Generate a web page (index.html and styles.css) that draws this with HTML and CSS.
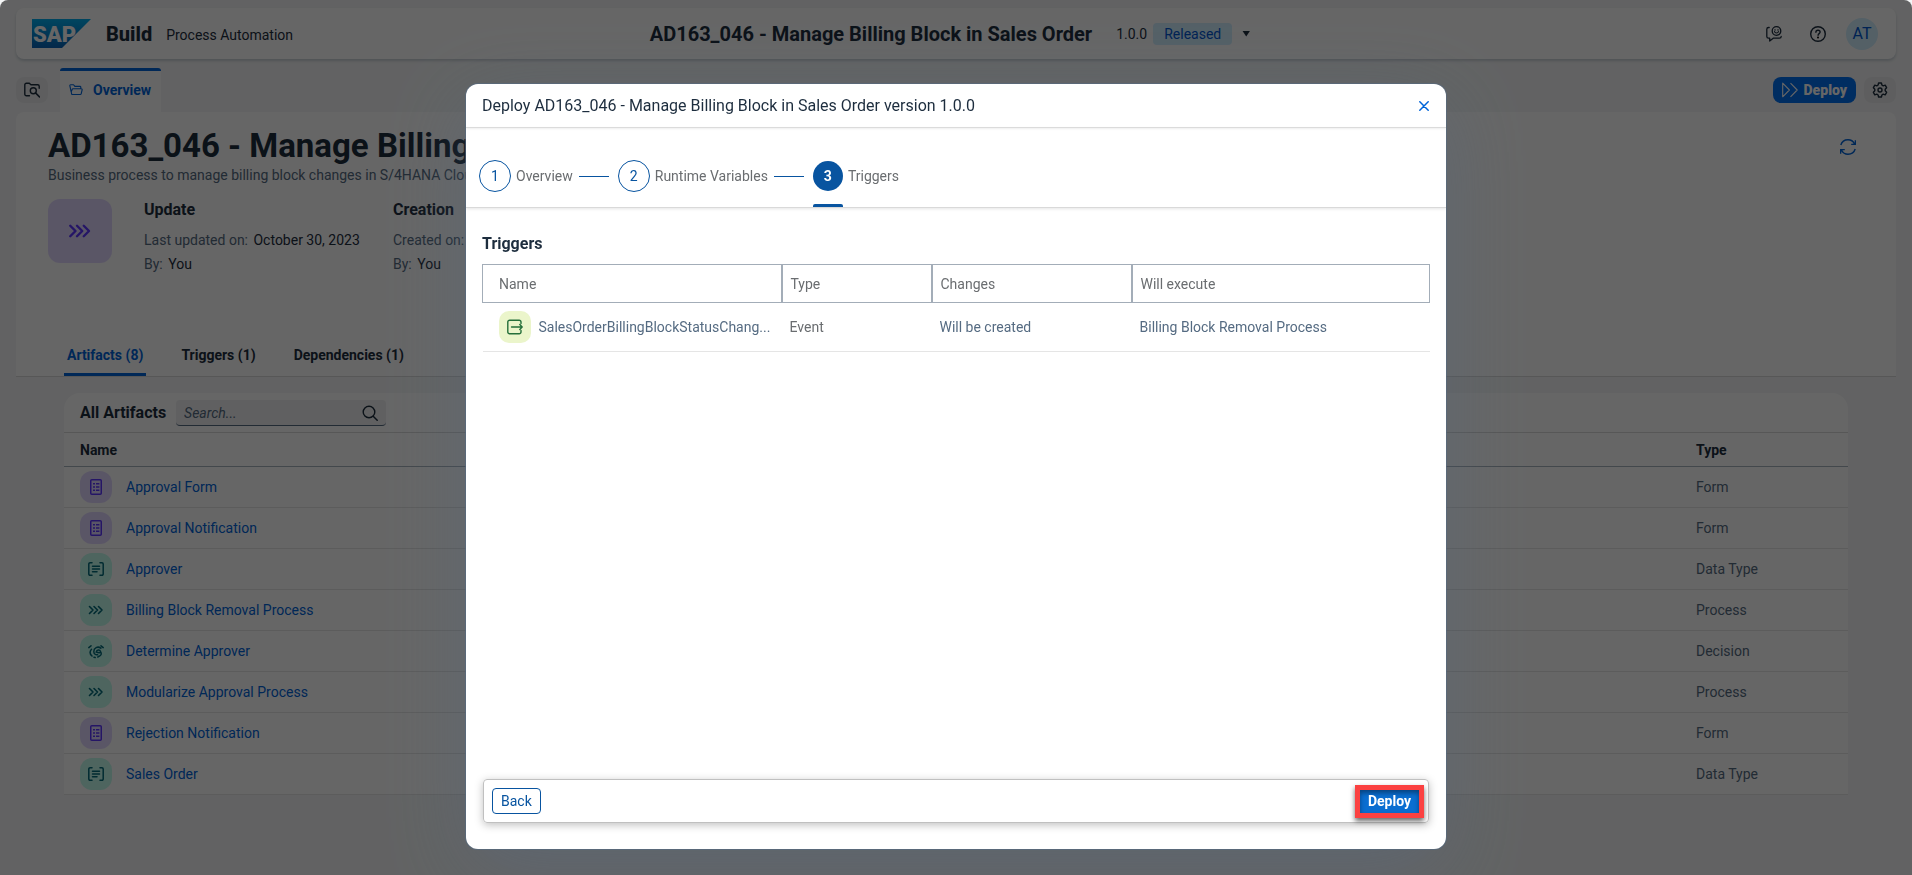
FILE: index.html
```html
<!DOCTYPE html>
<html lang="en">
<head>
<meta charset="utf-8">
<meta name="viewport" content="width=device-width, initial-scale=1">
<title>SAP Build Process Automation</title>
<link rel="stylesheet" href="styles.css">
</head>
<body>
<svg class="sprite" aria-hidden="true">
  <defs>
    <linearGradient id="logo-fill" x1="0" y1="0" x2="0" y2="1">
      <stop offset="0" stop-color="#00aeef"/><stop offset="1" stop-color="#0a63b8"/>
    </linearGradient>
  </defs>
  <symbol id="i-form" viewBox="0 0 16 16"><rect x="2.75" y=".75" width="10.5" height="14.5" rx="1" fill="none" stroke="currentColor" stroke-width="1.5"/><path d="M5 4.8h2M8 4.8h3.4M5 8h2M8 8h3.4M5 11.200h2M8 11.200h3.400" stroke="currentColor" stroke-width="1.500"/></symbol>
  <symbol id="i-data" viewBox="0 0 16 16"><path d="M4 1.750H2a1.200 1.200 0 0 0-1.200 1.200v10.100a1.200 1.200 0 0 0 1.200 1.200h2M12 1.750h2a1.200 1.200 0 0 1 1.200 1.200v10.100a1.200 1.200 0 0 1-1.200 1.200h-2M4.500 5.200h7M4.500 8h7M4.500 10.800h4.500" fill="none" stroke="currentColor" stroke-width="1.500" stroke-linecap="round"/></symbol>
  <symbol id="i-process" viewBox="0 0 16 16"><path d="M1.500 4.500 5 8l-3.500 3.500M6 4.500 9.500 8 6 11.500M10.500 4.500 14 8l-3.500 3.500" fill="none" stroke="currentColor" stroke-width="1.600" stroke-linecap="round" stroke-linejoin="round"/></symbol>
  <symbol id="i-decision" viewBox="0 0 16 16"><path d="M.8 4.600 3 2.800M13 2.800l2.200 1.800M3.500 6.200C1.500 8.500 1.800 11 4 13M6 14.200l1.200.3M12.800 5.200c-3-2.400-7-.3-7 3.300 0 2.600 2 3.700 3.800 3.200M8.200 9.200c.6-2.600 3.600-2.800 4.300-.6M9.500 9.500l2 .2M12.600 8.800c1.200 1.800.5 3.800-1 4.200-.7.200-1 .8-1.800 1" fill="none" stroke="currentColor" stroke-width="1.500" stroke-linecap="round"/></symbol>
  <symbol id="i-search" viewBox="0 0 16 16"><circle cx="7" cy="7" r="5.800" fill="none" stroke="currentColor" stroke-width="1.400"/><path d="m11.200 11.200 4 4" stroke="currentColor" stroke-width="1.500" stroke-linecap="round"/></symbol>
  <symbol id="i-foldersearch" viewBox="0 0 16 16"><path d="M5.500 13.800H2.300A1.500 1.500 0 0 1 .8 12.300V2.700a1.500 1.500 0 0 1 1.500-1.500h2.900c.8 0 .9 1.600 2 1.600h6.500a1.500 1.500 0 0 1 1.500 1.500v2" fill="none" stroke="currentColor" stroke-width="1.400" stroke-linecap="round"/><circle cx="9.300" cy="8.700" r="3" fill="none" stroke="currentColor" stroke-width="1.400"/><path d="m11.500 10.900 4 4" stroke="currentColor" stroke-width="1.500" stroke-linecap="round"/></symbol>
  <symbol id="i-folder" viewBox="0 0 16 16"><path d="M3.200 13.200 1 3.300C.9 2.600 1.200 2 2 2h3.200l1.500 1.800h5.800c.7 0 1 .4 1 1v1.800M3.200 13.200h9.600c.6 0 1-.3 1.100-.9l1.100-4.500c.1-.7-.2-1.200-.9-1.200H4.600c-.6 0-.9.300-1 .8l-1.200 3" fill="none" stroke="currentColor" stroke-width="1.300" stroke-linejoin="round"/></symbol>
  <symbol id="i-gear" viewBox="0 0 16 16"><path d="M6.600 1h2.800l.5 2 1.300.8 2-.6 1.400 2.500L13.200 7.200v1.600l1.400 1.500-1.400 2.500-2-.6-1.300.8-.5 2H6.600l-.5-2-1.300-.8-2 .6-1.400-2.500 1.400-1.500V7.200L1.400 5.700l1.400-2.500 2 .6L6.100 3z" fill="none" stroke="currentColor" stroke-width="1.400" stroke-linejoin="round"/><circle cx="8" cy="8" r="2" fill="none" stroke="currentColor" stroke-width="1.400"/></symbol>
  <symbol id="i-help" viewBox="0 0 16 16"><circle cx="8" cy="8" r="7.300" fill="none" stroke="currentColor" stroke-width="1.400"/><path d="M5.900 6.200c0-1.200.9-2 2.100-2s2.100.8 2.100 1.900c0 1.500-2 1.500-2 3.100" fill="none" stroke="currentColor" stroke-width="1.400" stroke-linecap="round"/><circle cx="8" cy="11.500" r="1"/></symbol>
  <symbol id="i-feedback" viewBox="0 0 16 16"><circle cx="10.500" cy="5" r="4.300" fill="none" stroke="currentColor" stroke-width="1.300"/><path d="M8.500 5.600c.6 1.900 3.400 1.900 4 0M9 3.600v.6M12 3.600v.6" fill="none" stroke="currentColor" stroke-width="1.100" stroke-linecap="round"/><path d="M3.200 1.500H2.600C1.400 1.500.8 2.200.8 3.200v7.300c0 1 .6 1.700 1.700 1.700h1.200v2.900l3.500-2.900h6.200c1.200 0 1.800-.7 1.800-1.700" fill="none" stroke="currentColor" stroke-width="1.300" stroke-linecap="round" stroke-linejoin="round"/></symbol>
  <symbol id="i-deploy" viewBox="0 0 16 16"><path d="M.7 1.200v13.600L7.400 8zM8.500 1.200 15.200 8l-6.700 6.800" fill="none" stroke="currentColor" stroke-width="1.100" stroke-linejoin="round"/></symbol>
  <symbol id="i-refresh" viewBox="0 0 16 16"><path d="M.8 6C1.800 2.800 4.600.8 8 .8c2.800 0 5.200 1.400 6.400 4M15.400 1.200v4.200h-4.200M15.200 10c-1 3.200-3.800 5.200-7.200 5.200-2.800 0-5.200-1.400-6.400-4M.6 14.800v-4.200h4.200" fill="none" stroke="currentColor" stroke-width="1.400"/></symbol>
  <symbol id="i-event" viewBox="0 0 16 16"><path d="M14 4.500V3a1.800 1.800 0 0 0-1.800-1.800H2.600A1.800 1.800 0 0 0 .8 3v10a1.800 1.800 0 0 0 1.800 1.800h9.600A1.800 1.800 0 0 0 14 13v-1.500M4.500 8h10.700M12.800 5.600 15.200 8l-2.400 2.400" fill="none" stroke="currentColor" stroke-width="1.400" stroke-linecap="round" stroke-linejoin="round"/></symbol>
  <symbol id="i-close" viewBox="0 0 10 10"><path d="m.8.800 8.400 8.400M9.200.8.800 9.200" stroke="currentColor" stroke-width="1.500" stroke-linecap="round"/></symbol>
</svg>

<div class="app">
  <header class="shell">
    <div class="brand">
      <svg class="logo" viewBox="0 0 59 29" role="img" aria-label="SAP"><path d="M0 0h59L30 29H0z" fill="url(#logo-fill)"/><text class="logo-text" x="1" y="23">SAP</text></svg>
      <span class="brand-name">Build</span>
      <span class="brand-product">Process Automation</span>
    </div>
    <div class="project">
      <span class="project-name">AD163_046 - Manage Billing Block in Sales Order</span>
      <span class="version">1.0.0</span>
      <span class="status">Released</span>
      <button class="caret" type="button" aria-label="Choose version"></button>
    </div>
    <div class="shell-actions">
      <button class="plain" type="button" aria-label="Feedback"><svg class="icon"><use href="#i-feedback"/></svg></button>
      <button class="plain" type="button" aria-label="Help"><svg class="icon"><use href="#i-help"/></svg></button>
      <button class="user" type="button">AT</button>
    </div>
  </header>

  <nav class="tabbar">
    <button class="tool" type="button" aria-label="Browse project"><svg class="icon"><use href="#i-foldersearch"/></svg></button>
    <a class="tab" href="#overview"><svg class="icon-s"><use href="#i-folder"/></svg>Overview</a>
    <div class="tabbar-actions">
      <button class="deploy" type="button"><svg class="icon"><use href="#i-deploy"/></svg>Deploy</button>
      <button class="tool" type="button" aria-label="Settings"><svg class="icon"><use href="#i-gear"/></svg></button>
    </div>
  </nav>

  <section class="overview" id="overview">
    <div class="heading">
      <div>
        <h1>AD163_046 - Manage Billing Block in Sales Order</h1>
        <p class="subtitle">Business process to manage billing block changes in S/4HANA Cloud</p>
      </div>
      <button class="plain refresh" type="button" aria-label="Refresh"><svg class="icon"><use href="#i-refresh"/></svg></button>
    </div>
    <div class="facts">
      <div class="project-icon"><svg class="icon-l"><use href="#i-process"/></svg></div>
      <div class="fact">
        <h2>Update</h2>
        <p>Last updated on: <b>October 30, 2023</b></p>
        <p>By: <b>You</b></p>
      </div>
      <div class="fact">
        <h2>Creation</h2>
        <p>Created on: <b>October 30, 2023</b></p>
        <p>By: <b>You</b></p>
      </div>
    </div>
    <nav class="sections">
      <a class="section active" href="#artifacts">Artifacts (8)</a>
      <a class="section" href="#triggers">Triggers (1)</a>
      <a class="section" href="#dependencies">Dependencies (1)</a>
    </nav>
  </section>

  <section class="artifacts" id="artifacts">
    <div class="toolbar">
      <h2>All Artifacts</h2>
      <label class="search"><input type="text" placeholder="Search..." aria-label="Search artifacts"><svg class="icon"><use href="#i-search"/></svg></label>
    </div>
    <table class="list">
      <thead><tr><th>Name</th><th class="col-type">Type</th></tr></thead>
      <tbody>
        <tr><td><div class="item"><span class="badge violet"><svg class="icon"><use href="#i-form"/></svg></span><a href="#a1">Approval Form</a></div></td><td>Form</td></tr>
        <tr><td><div class="item"><span class="badge violet"><svg class="icon"><use href="#i-form"/></svg></span><a href="#a2">Approval Notification</a></div></td><td>Form</td></tr>
        <tr><td><div class="item"><span class="badge teal"><svg class="icon"><use href="#i-data"/></svg></span><a href="#a3">Approver</a></div></td><td>Data Type</td></tr>
        <tr><td><div class="item"><span class="badge teal"><svg class="icon"><use href="#i-process"/></svg></span><a href="#a4">Billing Block Removal Process</a></div></td><td>Process</td></tr>
        <tr><td><div class="item"><span class="badge teal"><svg class="icon"><use href="#i-decision"/></svg></span><a href="#a5">Determine Approver</a></div></td><td>Decision</td></tr>
        <tr><td><div class="item"><span class="badge teal"><svg class="icon"><use href="#i-process"/></svg></span><a href="#a6">Modularize Approval Process</a></div></td><td>Process</td></tr>
        <tr><td><div class="item"><span class="badge violet"><svg class="icon"><use href="#i-form"/></svg></span><a href="#a7">Rejection Notification</a></div></td><td>Form</td></tr>
        <tr><td><div class="item"><span class="badge teal"><svg class="icon"><use href="#i-data"/></svg></span><a href="#a8">Sales Order</a></div></td><td>Data Type</td></tr>
      </tbody>
    </table>
  </section>
</div>

<div class="overlay">
  <div class="dialog" role="dialog" aria-modal="true" aria-labelledby="dialog-title">
    <header class="dialog-head">
      <h2 id="dialog-title">Deploy AD163_046 - Manage Billing Block in Sales Order version 1.0.0</h2>
      <button class="close" type="button" aria-label="Close"><svg class="icon-x"><use href="#i-close"/></svg></button>
    </header>
    <ol class="steps">
      <li class="step"><button type="button"><span class="num">1</span>Overview</button></li>
      <li class="step"><button type="button"><span class="num">2</span>Runtime Variables</button></li>
      <li class="step current"><button type="button"><span class="num">3</span>Triggers</button></li>
    </ol>
    <div class="dialog-body">
      <h3>Triggers</h3>
      <table class="triggers">
        <thead><tr><th class="c-name">Name</th><th class="c-type">Type</th><th class="c-changes">Changes</th><th>Will execute</th></tr></thead>
        <tbody><tr>
          <td><div class="trigger"><span class="badge lime"><svg class="icon"><use href="#i-event"/></svg></span><span>SalesOrderBillingBlockStatusChang...</span></div></td>
          <td class="grey">Event</td><td>Will be created</td><td>Billing Block Removal Process</td>
        </tr></tbody>
      </table>
      <footer class="dialog-foot">
        <button class="back" type="button">Back</button>
        <span class="callout"><button class="confirm" type="button">Deploy</button></span>
      </footer>
    </div>
  </div>
</div>
</body>
</html>
```
FILE: styles.css
```css
*, *::before, *::after { box-sizing: border-box; }
body { margin: 0; background: #fff; color: #1d2d3e; font: 14px/20px Roboto, "Liberation Sans", sans-serif; }
h1, h2, h3, p, ol { margin: 0; padding: 0; }
button, input { font: inherit; color: inherit; }
button { border: 0; padding: 0; background: none; }
a { color: #0064d9; text-decoration: none; }
svg { display: block; flex: none; }
table { border-collapse: collapse; table-layout: fixed; width: 100%; }
.sprite { position: absolute; width: 0; height: 0; }
.icon { width: 16px; height: 16px; }
.icon-s { width: 14px; height: 14px; }
.icon-l { width: 24px; height: 24px; }
.icon-x { width: 10px; height: 10px; }

.app { min-height: 100vh; padding: 8px 16px; background: #f5f6f7; }

.shell { display: grid; grid-template-columns: 1fr auto 1fr; align-items: center; height: 51px; padding: 0 18px 0 16px; background: #fff; border-radius: 8px; box-shadow: 0 2px 3px #c8cfd6; }
.brand { display: flex; align-items: center; }
.logo { width: 59px; height: 29px; margin-right: 15px; }
.logo-text { font: 900 22px/1 Roboto, sans-serif; fill: #fff; }
.brand-name { margin-right: 14px; font-size: 20px; font-weight: 800; }
.brand-product { padding-top: 2px; }
.project { display: flex; align-items: center; padding-right: 10px; color: #1d2d3e; }
.project-name { margin-right: 24px; font-size: 20px; font-weight: 700; }
.version { margin-right: 6px; }
.status { padding: 1px 11px; border-radius: 4px; background: #d1efff; color: #0057d2; }
.caret { width: 8px; height: 6px; margin-left: 10px; background: #1d2d3e; clip-path: polygon(0 0, 100% 0, 50% 100%); }
.shell-actions { display: flex; justify-content: flex-end; align-items: center; gap: 28px; }
.user { width: 32px; height: 32px; margin-left: -8px; border-radius: 50%; background: #d1efff; color: #0057d2; font-size: 16px; }

.tabbar { display: flex; align-items: center; height: 44px; margin-top: 9px; }
.tool { display: flex; align-items: center; justify-content: center; width: 32px; height: 26px; border-radius: 8px; background: #ebecee; }
.tab { display: flex; align-items: center; gap: 10px; height: 44px; margin-left: 12px; padding: 0 10px 3px 9px; border-top: 3px solid #0064d9; border-radius: 3px 3px 0 0; background: #fff; font-weight: 700; }
.tabbar-actions { display: flex; gap: 8px; margin-left: auto; }
.deploy { display: flex; align-items: center; gap: 6px; height: 26px; padding: 0 9px; border-radius: 8px; background: #0070f2; color: #fff; font-weight: 900; }

.overview { background: #fff; border-bottom: 1px solid #d9d9d9; border-radius: 8px 8px 0 0; padding: 16px 32px 0; }
.heading { display: flex; justify-content: space-between; }
h1 { font-size: 33px; line-height: 36px; font-weight: 700; }
.subtitle { padding-top: 1px; color: #556b82; }
.refresh { align-self: flex-start; margin: 11px 8px 0 0; color: #0064d9; }
.facts { display: flex; height: 145px; padding-top: 14px; }
.project-icon { display: flex; align-items: center; justify-content: center; width: 64px; height: 64px; margin-right: 32px; border-radius: 12px; background: #e2d8ff; color: #5d36ff; }
.fact { width: 249px; color: #556b82; }
.fact h2 { margin-bottom: 9px; color: #1d2d3e; font-size: 16px; line-height: 22px; }
.fact p { margin-bottom: 4px; }
.fact b { margin-left: 2px; color: #1d2d3e; font-weight: 400; }
.sections { display: flex; gap: 32px; padding-left: 16px; }
.section { height: 46px; padding: 15px 3px 0; border-bottom: 3px solid transparent; color: #1d2d3e; font-weight: 700; }
.section.active { color: #0064d9; border-color: #0064d9; border-radius: 2px 2px 0 0; }

.artifacts { margin: 16px 48px 0; background: #fff; border-radius: 16px 16px 0 0; }
.toolbar { display: flex; align-items: center; gap: 10px; height: 40px; padding: 1px 16px 0; border-bottom: 1px solid #d9d9d9; }
.toolbar h2 { font-size: 16px; }
.search { display: flex; align-items: center; width: 210px; height: 26px; padding: 0 8px; border-bottom: 1px solid #556b82; border-radius: 4px; background: #f0f1f2; }
.search input { flex: 1; min-width: 0; padding: 0; border: 0; background: none; }
.search input::placeholder { color: #556b82; font-style: italic; opacity: 1; }
.list th { height: 33px; padding: 1px 16px 0; border-bottom: 1px solid #a8b3bd; text-align: left; font-weight: 700; }
.list .col-type { width: 168px; }
.list td { height: 41px; padding: 0 16px; border-bottom: 1px solid #e5e5e5; color: #556b82; }
.item { display: flex; align-items: center; gap: 14px; }
.badge { display: flex; flex: none; align-items: center; justify-content: center; width: 32px; height: 32px; border-radius: 12px; }
.violet { background: #e2d8ff; color: #5d36ff; }
.teal { background: #c2fcee; color: #046c7a; }
.lime { background: #ebf5cb; color: #256f3a; border-radius: 10px; }

.overlay { position: fixed; inset: 0; display: flex; justify-content: center; padding: 84px 16px 26px; background: rgba(0, 0, 0, .6); border-radius: 8px 8px 0 0; }
.dialog { display: flex; flex-direction: column; width: 54%; min-width: 960px; max-width: 980px; overflow: hidden; background: #fff; border-radius: 12px; box-shadow: 0 0 0 1px rgba(85, 107, 130, .6), 0 20px 80px rgba(85, 107, 130, .4); }
.dialog-head { display: flex; align-items: center; justify-content: space-between; height: 44px; padding: 0 16px; border-bottom: 1px solid #d9d9d9; box-shadow: 0 1px 2px #eee; }
.dialog-head h2 { font-size: 16px; font-weight: 400; }
.close { padding: 0 1px; color: #0064d9; }
.steps { display: flex; height: 80px; padding: 16px 13px 0; border-bottom: 1px solid #d9d9d9; box-shadow: 0 1px 3px #e5e5e5; list-style: none; }
.step { display: flex; align-items: center; color: #6a6d70; }
.step button { display: flex; align-items: center; gap: 5px; }
.step:not(:last-child)::after { content: ""; width: 30px; height: 1px; margin: 2px 9px 0 6px; background: #0854a0; }
.num { display: flex; align-items: center; justify-content: center; width: 32px; height: 32px; border: 1px solid #0854a0; border-radius: 50%; color: #0854a0; }
.current { position: relative; }
.current .num { width: 30px; height: 30px; border: 0; background: #0854a0; color: #fff; font-weight: 700; }
.current::after { content: ""; position: absolute; left: 0; bottom: 0; width: 30px; height: 3px; border-radius: 2px 2px 0 0; background: #0854a0; }
.dialog-body { display: flex; flex: 1; flex-direction: column; padding: 26px 16px; }
.dialog-body h3 { margin-bottom: 10px; font-size: 16px; }
.triggers th { height: 38px; padding: 0 8px; border: 1px solid #a3adb8; color: #6a6d70; font-weight: 400; text-align: left; }
.triggers th + th { border-left-width: 2px; }
.triggers .c-name { width: 299px; padding-left: 16px; }
.triggers .c-type { width: 150px; }
.triggers .c-changes { width: 200px; }
.triggers td { height: 49px; padding: 0 8px; border-bottom: 1px solid #e5e5e5; color: #556b82; }
.triggers td:first-child { padding-left: 16px; }
.triggers .grey { color: #6a6d70; }
.trigger { display: flex; align-items: center; gap: 8px; white-space: nowrap; }
.dialog-foot { display: flex; align-items: center; justify-content: space-between; height: 44px; margin: auto 1px 0; padding: 0 4px 0 8px; border: 1px solid #c0c0c0; border-radius: 4px; box-shadow: 0 2px 8px rgba(0, 0, 0, .25); }
.back { height: 26px; padding: 0 8px; border: 1px solid #0854a0; border-radius: 4px; color: #0854a0; }
.callout { border: 5px solid #fb4141; box-shadow: 0 3px 5px rgba(0, 0, 0, .6); }
.confirm { display: block; height: 23px; padding: 0 8px; background: #0a6ed1; box-shadow: inset 0 3px 5px rgba(0, 0, 0, .4); color: #fff; font-weight: 700; }
```
